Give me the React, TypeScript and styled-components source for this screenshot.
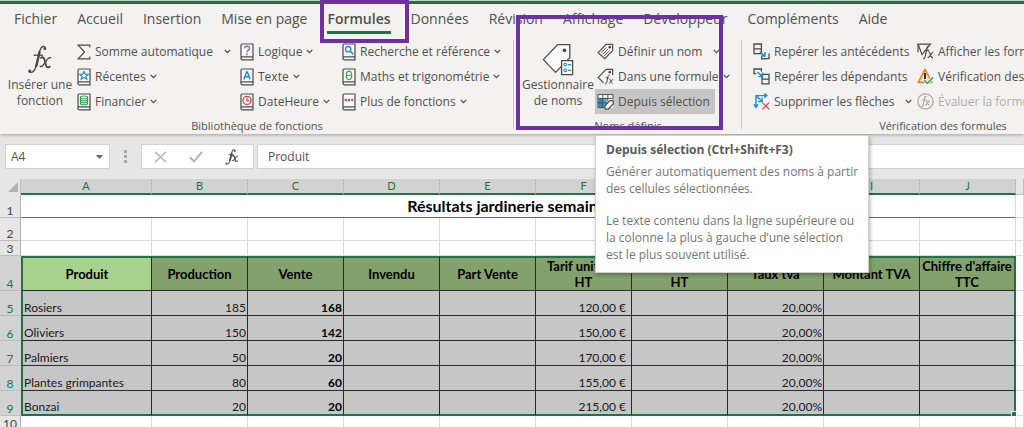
import React from 'react';
import styled, { createGlobalStyle, css } from 'styled-components';

const UI = '"Open Sans", "Noto Sans", sans-serif';
const SHEET = 'Lato, "Open Sans", sans-serif';
const GREEN = '#217346';
const PURPLE = '#7030a0';

const GlobalStyle = createGlobalStyle`
  * { box-sizing: border-box; }
  body { margin: 0; background: #e6e6e6; font-family: ${UI}; }
  button, input { font: inherit; color: inherit; }
`;

const App_ = styled.div`
  height: 100vh;
  overflow: hidden;
  display: flex;
  flex-direction: column;
  color: #505050;
`;

const TitleStrip = styled.div`
  flex: none;
  height: 4px;
  border-top: 1px solid #b9d3c5;
  background: ${GREEN};
`;

const Ribbon = styled.header`
  flex: none;
  background: #f3f2f1;
  box-shadow: 0 1px 3px rgba(0, 0, 0, 0.3);
`;

const Tabs = styled.nav`
  display: flex;
  gap: 20px;
  height: 35px;
  padding-left: 14px;
  align-items: flex-start;
`;

const Tab = styled.button<{ $active?: boolean }>`
  position: relative;
  flex: none;
  height: 30px;
  padding: 3px 0 0;
  border: 0;
  border-bottom: 3px solid ${(p) => (p.$active ? GREEN : 'transparent')};
  background: none;
  font-size: 14px;
  line-height: 24px;
  font-weight: ${(p) => (p.$active ? 600 : 400)};
  white-space: nowrap;
`;

const Highlight = styled.span<{ $inset: string }>`
  position: absolute;
  inset: ${(p) => p.$inset};
  border: 4px solid ${PURPLE};
  pointer-events: none;
  z-index: 2;
`;

const Groups = styled.div`
  display: grid;
  grid-template-columns: 514px 228px minmax(402px, 1fr);
  height: 95px;
`;

const Group = styled.section`
  position: relative;
  display: flex;
  flex-direction: column;
  &:not(:last-of-type)::after {
    content: '';
    position: absolute;
    inset: 1px 0 5px auto;
    width: 1px;
    background: #c8c6c4;
  }
`;

const Tools = styled.div<{ $columns: string; $left: number }>`
  display: grid;
  grid-template-columns: ${(p) => p.$columns};
  padding-left: ${(p) => p.$left}px;
  height: 76px;
`;

const GroupLabel = styled.div`
  font-size: 11px;
  line-height: 16px;
  padding-top: 3px;
  text-align: center;
  white-space: nowrap;
`;

const Column = styled.div`
  display: flex;
  flex-direction: column;
  align-items: flex-start;
`;

const ToolButton = styled.button<{ $pressed?: boolean; $muted?: boolean }>`
  display: flex;
  align-items: center;
  height: 25px;
  padding: 0 5px 0 2px;
  border: 0;
  background: ${(p) => (p.$pressed ? '#c5c5c5' : 'none')};
  color: ${(p) => (p.$muted ? '#b0aeac' : 'inherit')};
  font-size: 12px;
  white-space: nowrap;
  svg:first-child { flex: none; margin-right: 4px; }
`;

const BigButton = styled.button`
  display: flex;
  flex-direction: column;
  align-items: center;
  padding: 3px 0 0;
  border: 0;
  background: none;
  font-size: 12px;
  line-height: 16px;
  white-space: nowrap;
  svg { display: block; }
`;

const BigIcon = styled.span`
  display: grid;
  place-items: center;
  height: 35px;
`;

const ChevronSvg = styled.svg<{ $split?: boolean }>`
  flex: none;
  margin-left: ${(p) => (p.$split ? 11 : 4)}px;
`;

const Tooltip = styled.div`
  position: absolute;
  top: 96px;
  left: 81px;
  z-index: 3;
  width: 274px;
  padding: 5px 10px 9px;
  border: 1px solid #d0d0d0;
  background: #fff;
  box-shadow: 1px 2px 4px rgba(0, 0, 0, 0.3);
  color: #757575;
  font-size: 12px;
  line-height: 17px;
  white-space: nowrap;
  strong { display: block; margin-bottom: 5px; color: #5a5a5a; }
  p { margin: 0; }
  p + p { margin-top: 15px; }
`;

const FormulaBar = styled.div`
  flex: none;
  display: grid;
  grid-template-columns: 105px 25px 113px 1fr;
  column-gap: 3px;
  height: 45px;
  padding: 10px 0 10px 5px;
  font-size: 12px;
`;

const Field = styled.label`
  display: flex;
  align-items: center;
  height: 25px;
  border: 1px solid #d2d2d2;
  background: #fff;
  input {
    flex: 1;
    min-width: 0;
    padding: 0 5px;
    border: 0;
    outline: 0;
    background: none;
  }
  svg { margin-right: 6px; }
`;

const FormulaField = styled(Field)`
  border-right: 0;
  input { padding-left: 10px; }
`;

const Grip = styled.div`
  display: grid;
  place-items: center;
`;

const FormulaActions = styled.div`
  display: flex;
  align-items: center;
  justify-content: space-around;
  height: 25px;
  padding-right: 3px;
  border: 1px solid #d2d2d2;
  background: #fff;
  button { display: grid; place-items: center; width: 26px; padding: 0; border: 0; background: none; }
`;

const Sheet = styled.table`
  flex: none;
  width: 100%;
  table-layout: fixed;
  border-collapse: separate;
  border-spacing: 0;
  font-family: ${SHEET};
  font-size: 12px;
  line-height: 15px;
  color: #1a1a1a;
  td, th { padding: 0; white-space: nowrap; }
`;

const Col = styled.col<{ $w?: number }>`
  width: ${(p) => (p.$w ? `${p.$w}px` : 'auto')};
`;

const Row = styled.tr<{ $h: number }>`
  height: ${(p) => p.$h}px;
`;

const Corner = styled.td`
  border-right: 1px solid #c0c0c0;
  background: #e6e6e6;
  svg { display: block; margin-left: auto; margin-right: 2px; }
`;

const ColHead = styled.th<{ $selected?: boolean }>`
  border-right: 1px solid #bdbdbd;
  border-bottom: ${(p) => (p.$selected ? `2px solid ${GREEN}` : '1px solid #bdbdbd')};
  background: ${(p) => (p.$selected ? '#d2d2d2' : '#e6e6e6')};
  color: ${GREEN};
  font-weight: 400;
  font-size: 11px;
  line-height: 14px;
`;

const RowHead = styled.th<{ $selected?: boolean }>`
  border-right: 1px solid ${(p) => (p.$selected ? '#d2d2d2' : '#b4b4b4')};
  border-bottom: 1px solid #bdbdbd;
  background: ${(p) => (p.$selected ? '#d2d2d2' : '#e6e6e6')};
  color: ${(p) => (p.$selected ? GREEN : '#444')};
  font-weight: 400;
  font-size: 12px;
  line-height: 13px;
  vertical-align: bottom;
`;

const Cell = styled.td`
  border-right: 1px solid #dadada;
  border-bottom: 1px solid #dadada;
  background: #fff;
`;

const TitleCell = styled(Cell)`
  border-bottom: 1px solid #6a6a6a;
  color: #000;
  font-size: 16px;
  font-weight: 700;
  line-height: 20px;
  text-align: center;
`;

type Edges = { $left?: boolean; $right?: boolean; $bottom?: boolean };

const edges = css<Edges>`
  border-right: 1px solid #2b2b2b;
  border-bottom: 1px solid #2b2b2b;
  ${(p) => p.$left && `border-left: 2px solid ${GREEN};`}
  ${(p) => p.$right && `border-right: 2px solid ${GREEN};`}
  ${(p) => p.$bottom && `border-bottom: 2px solid ${GREEN};`}
`;

const HeadCell = styled.th<Edges>`
  ${edges}
  border-top: 2px solid ${GREEN};
  background: ${(p) => (p.$left ? '#a9d18e' : '#82a16c')};
  color: #000;
  font-size: 13px;
  line-height: 16px;
`;

const DataCell = styled.td<Edges & { $align?: string; $bold?: boolean }>`
  ${edges}
  position: relative;
  && { padding: 0 ${(p) => (p.$align === 'accounting' ? 5 : 1)}px 0 1px; }
  background: #c6c6c6;
  font-weight: ${(p) => (p.$bold ? 700 : 400)};
  color: ${(p) => (p.$bold ? '#000' : 'inherit')};
  text-align: ${(p) => (p.$align ? 'right' : 'left')};
  vertical-align: bottom;
`;

const FillHandle = styled.span`
  position: absolute;
  right: -3px;
  bottom: -3px;
  width: 6px;
  height: 6px;
  border: 1px solid #fff;
  background: ${GREEN};
`;

const ink = '#4a4a4a';
const blue = '#1e8bcd';

const Chevron = ({ split }: { split?: boolean }) => (
  <ChevronSvg $split={split} width="7" height="5" viewBox="0 0 7 5" fill="none" stroke={ink} strokeWidth="1.2">
    <path d="M.7 .8 3.5 3.6 6.3 .8" />
  </ChevronSvg>
);

const Book = ({ children }: { children: React.ReactNode }) => (
  <svg width="14" height="18" viewBox="0 0 14 18" fill="none">
    <path d="M1 15.5V2.2Q1 1 2.2 1H13v15.8H2.4A1.3 1.3 0 0 1 2.4 13.8H13" fill="#fafafa" stroke={ink} strokeWidth="1.2" />
    {children}
  </svg>
);

const Sigma = () => (
  <svg width="14" height="16" viewBox="0 0 14 16" fill="none" stroke={ink} strokeWidth="1.2">
    <path d="M12.8 3.4V1.2H1.2L7.6 8 1.2 14.8h11.6v-2.2" />
  </svg>
);
const Star = () => (
  <Book><path d="m7 3.4 1.2 2.8 3 .2-2.3 1.9.8 2.9L7 9.6l-2.7 1.6.8-2.9-2.3-1.9 3-.2z" stroke={blue} strokeWidth="1.2" /></Book>
);
const Coins = () => (
  <Book>
    <g stroke="#2e9e48" strokeWidth="1.1">
      <ellipse cx="7" cy="4.4" rx="3.6" ry="1.4" />
      <path d="M3.4 4.4v6c0 .8 1.6 1.4 3.6 1.4s3.6-.6 3.6-1.4v-6M3.4 6.5c0 .8 1.6 1.4 3.6 1.4s3.6-.6 3.6-1.4M3.4 8.5c0 .8 1.6 1.4 3.6 1.4s3.6-.6 3.6-1.4" />
    </g>
  </Book>
);
const Question = () => (
  <Book>
    <path d="M4.6 5.2C4.6 2.6 9.6 2.6 9.6 5.2 9.6 7 7 7.2 7 9.4" stroke="#a94bc4" strokeWidth="1.3" />
    <circle cx="7" cy="11.4" r=".9" fill="#a94bc4" />
  </Book>
);
const LetterA = () => (
  <Book><path d="M3.8 11.2 6.7 4h.6l2.9 7.2M5 8.7h4" stroke={blue} strokeWidth="1.5" /></Book>
);
const Clock = () => (
  <Book>
    <circle cx="7" cy="7.4" r="4" stroke="#e8383d" strokeWidth="1.3" />
    <path d="M7 5v2.6h2.4" stroke="#e8383d" strokeWidth="1.2" />
  </Book>
);
const Search = () => (
  <Book>
    <circle cx="6.2" cy="6.2" r="2.7" stroke={blue} strokeWidth="1.3" />
    <path d="m8.2 8.2 3.2 3.2" stroke={blue} strokeWidth="1.5" />
  </Book>
);
const Theta = () => (
  <Book>
    <ellipse cx="7" cy="7.4" rx="2.7" ry="4.2" stroke="#3aa655" strokeWidth="1.2" />
    <path d="M4.4 7.4h5.2" stroke="#3aa655" strokeWidth="1.1" />
  </Book>
);
const Dots = () => (
  <Book>
    <g fill="#e8383d"><circle cx="3.8" cy="7" r="1.2" /><circle cx="7" cy="7" r="1.2" /><circle cx="10.2" cy="7" r="1.2" /></g>
  </Book>
);

const Fx = ({ width, height, color = ink, stroke = 1.4 }: { width: number; height: number; color?: string; stroke?: number }) => (
  <svg width={width} height={height} viewBox="0 0 26 30" fill="none" stroke={color} strokeWidth={stroke}>
    <path d="M18.6 3.2C17.6 .6 14.6 .9 13.3 4.6 11.8 9 10 18.6 8.2 24 7 27.8 4 29.4 1.8 27.4" />
    <path d="M12.6 6.6C11.6 11 10.4 17.6 8.8 22.6" strokeWidth={stroke * 1.8} />
    <path d="M6.4 10.6h9.6" />
    <path d="M13.4 13.8c2.2-2.2 3.6-1.2 4.4 1.6l1.4 5.6c.8 2.6 2.4 3 4.4.8" strokeWidth={stroke * 1.4} />
    <path d="M24.6 13.4c-2-1.2-3.4.4-6 4.2-2.4 3.6-3.8 5.6-6 4.4" />
    <circle cx="18" cy="3.6" r=".9" fill={color} />
    <circle cx="2.4" cy="27" r=".9" fill={color} />
  </svg>
);

const NameManager = () => (
  <svg width="32" height="33" viewBox="0 0 32 33" fill="none">
    <path d="M1.4 16.6 15.6 1.6h12.2v13L13.6 29.4z" fill="#fafafa" stroke={ink} strokeWidth="1.3" />
    <circle cx="22.4" cy="7.4" r="1.8" fill={ink} />
    <path d="M19.6 17.6h11v14h-11z" fill="#fff" stroke={ink} strokeWidth="1.3" />
    <path d="M22 20.4h2.4v2.4H22zM22 26.2h2.4v2.4H22z" stroke={blue} />
    <path d="M25.8 21.6h3.4M25.8 27.4h3.4" stroke={blue} strokeWidth="1.2" />
  </svg>
);
const TagLines = () => (
  <svg width="17" height="17" viewBox="0 0 17 17" fill="none" stroke={ink} strokeWidth="1.2">
    <path d="M1.2 9.6 9.2 1.4h6.4v6.2L7.8 15.6z" fill="#fafafa" />
    <circle cx="12.8" cy="4.2" r=".8" fill={ink} />
    <path d="m4 9.8 5.4-5.4M5.6 11.4 11 6M7.2 13l5.4-5.4" strokeWidth="1" />
  </svg>
);
const TagFx = () => (
  <svg width="17" height="17" viewBox="0 0 17 17" fill="none" stroke={ink} strokeWidth="1.2">
    <path d="M15.6 7V1.4H9.2L1.2 9.4l5.4 5.4" fill="#fafafa" />
    <circle cx="12.8" cy="4.2" r=".8" fill={ink} />
    <path d="M12.8 7.2c-1.2-.6-1.7.2-2 1.6l-1 5.4c-.3 1.4-.9 2-1.9 1.6M8.8 9.8h3M12.4 11.2c1.4-.6 1.2 3.8 3.2 4.2M16.2 11.2c-1.4 0-2.2 3.6-4.2 4.2" strokeWidth="1" />
  </svg>
);
const TableTag = () => (
  <svg width="17" height="17" viewBox="0 0 17 17" fill="none">
    <path d="M1 1.6h15v13H1z" fill="#fff" />
    <path d="M1.4 5.4h4.4v9H1.4z" fill={blue} />
    <path d="M5.8 5.4h4.6V10L8 14.4H5.8z" fill="#58a9dc" />
    <path d="M1 1.6h15v4M1 1.6v13h6.4M1 5.4h15M1 9.8h9M5.8 1.6v13M10.8 1.6v6" stroke={ink} />
    <path d="m7.8 13 5-5.4h3.4V11l-5 5.2H8.4z" fill="#fafafa" stroke={ink} strokeWidth="1.2" />
  </svg>
);
const Precedents = () => (
  <svg width="17" height="17" viewBox="0 0 17 17" fill="none">
    <path d="M1 1h7.4v9.6H1zM1 5.8h7.4M11 15.6h5v-5M8.6 13.2v2.6H12" stroke={ink} strokeWidth="1.3" />
    <path d="m6.8 8.4 4.8 4.4M12 9v4H8" stroke={blue} strokeWidth="1.4" />
  </svg>
);
const Dependents = () => (
  <svg width="17" height="17" viewBox="0 0 17 17" fill="none">
    <path d="M3.2 5.6H1V1h7.4v2.4M9 6.4h7v9.4H9zM9 11.2h7" stroke={ink} strokeWidth="1.3" />
    <path d="m4.4 4 4.8 4.4M9.6 4.4v4.2H5.4" stroke={blue} strokeWidth="1.4" />
  </svg>
);
const RemoveArrows = () => (
  <svg width="17" height="17" viewBox="0 0 17 17" fill="none">
    <path d="M3 14V2.6h10.4M1 11.4l2 2.8 2-2.8M11.2.6l2.6 2-2.6 2M4 3.6l5 4.8M9 4.6v4H5" stroke={blue} strokeWidth="1.4" />
    <path d="m9.4 9.6 6.8 6.6M16.2 9.6l-6.8 6.6" stroke="#e8474b" strokeWidth="1.3" />
  </svg>
);
const ShowFormulas = () => (
  <svg width="17" height="17" viewBox="0 0 17 17" fill="none" stroke={ink} strokeWidth="1.2">
    <path d="M5.4 12.2 1 1.2h12.4L4.8 12" />
    <path d="M1 1.2v8" />
    <path d="M12.2 3.4c-1.4-.6-2.1.4-2.5 2.4l-1.4 7.4c-.4 1.8-1.1 2.6-2.3 2.2M7.6 7.4h4.6M11.4 9c1.9-.8 1.8 5.6 4.6 6M16.4 9c-1.9 0-2.8 5.4-5.8 6" />
  </svg>
);
const ErrorCheck = () => (
  <svg width="17" height="17" viewBox="0 0 17 17" fill="none">
    <path d="M8 1.4 1.2 14.4h13.6z" fill="#fbe3c4" stroke="#e67e22" strokeWidth="1.6" strokeLinejoin="round" />
    <path d="M8 5v6" stroke="#333" strokeWidth="2" />
    <path d="m7.2 12 3 3.4 6-6" stroke="#fff" strokeWidth="3" />
    <path d="m7.2 12 3 3.4 6-6" stroke="#3aa655" strokeWidth="1.6" />
  </svg>
);
const Evaluate = () => (
  <svg width="17" height="17" viewBox="0 0 17 17" fill="none" stroke="#a5a5a5" strokeWidth="1.2">
    <circle cx="8.5" cy="8.5" r="7.7" />
    <path d="M9.6 3.6c-1.2-.5-1.8.2-2.1 1.8l-1.2 6.4c-.3 1.4-.9 2-1.9 1.6M5.4 7h4M8.8 7.6c1.6-.6 1.4 4.2 3.6 4.6M12.8 7.6c-1.4 0-2.4 4.2-4.6 4.6" />
  </svg>
);

type Item = { icon: React.ReactNode; label: string; arrow?: 'near' | 'split'; pressed?: boolean; muted?: boolean };

const Tool = ({ icon, label, arrow, pressed, muted }: Item) => (
  <ToolButton $pressed={pressed} $muted={muted} disabled={muted}>
    {icon}
    <span>{label}</span>
    {arrow && <Chevron split={arrow === 'split'} />}
  </ToolButton>
);

const ToolColumn = ({ items }: { items: Item[] }) => (
  <Column>{items.map((item) => <Tool key={item.label} {...item} />)}</Column>
);

const tabs = ['Fichier', 'Accueil', 'Insertion', 'Mise en page', 'Formules', 'Données', 'Révision', 'Affichage', 'Développeur', 'Compléments', 'Aide'];

const letters = ['A', 'B', 'C', 'D', 'E', 'F', 'G', 'H', 'I', 'J'];

const headings = [
  ['Produit'], ['Production'], ['Vente'], ['Invendu'], ['Part Vente'],
  ['Tarif unitaire', 'HT'], ['Montant', 'HT'], ['Taux tva'], ['Montant TVA'], ["Chiffre d'affaire", 'TTC'],
];

const products = [
  { name: 'Rosiers', made: 185, sold: 168, price: '120,00 €' },
  { name: 'Oliviers', made: 150, sold: 142, price: '150,00 €' },
  { name: 'Palmiers', made: 50, sold: 20, price: '170,00 €' },
  { name: 'Plantes grimpantes', made: 80, sold: 60, price: '155,00 €' },
  { name: 'Bonzai', made: 20, sold: 20, price: '215,00 €' },
];

const BlankRow = ({ n, height }: { n: number; height: number }) => (
  <Row $h={height}>
    <RowHead scope="row">{n}</RowHead>
    {letters.map((l) => <Cell key={l} />)}
    <Cell />
  </Row>
);

export default function App() {
  return (
    <App_>
      <GlobalStyle />
      <TitleStrip />
      <Ribbon>
        <Tabs>
          {tabs.map((t) => (
            <Tab key={t} $active={t === 'Formules'}>
              {t}
              {t === 'Formules' && <Highlight $inset="-4px -18px -12px -7px" />}
            </Tab>
          ))}
        </Tabs>
        <Groups>
          <Group>
            <Tools $left={5} $columns="70px 163px 102px 1fr">
              <BigButton>
                <BigIcon><Fx width={26} height={29} /></BigIcon>
                <span>Insérer une<br />fonction</span>
              </BigButton>
              <ToolColumn items={[
                { icon: <Sigma />, label: 'Somme automatique', arrow: 'split' },
                { icon: <Star />, label: 'Récentes', arrow: 'near' },
                { icon: <Coins />, label: 'Financier', arrow: 'near' },
              ]} />
              <ToolColumn items={[
                { icon: <Question />, label: 'Logique', arrow: 'near' },
                { icon: <LetterA />, label: 'Texte', arrow: 'near' },
                { icon: <Clock />, label: 'DateHeure', arrow: 'near' },
              ]} />
              <ToolColumn items={[
                { icon: <Search />, label: 'Recherche et référence', arrow: 'near' },
                { icon: <Theta />, label: 'Maths et trigonométrie', arrow: 'near' },
                { icon: <Dots />, label: 'Plus de fonctions', arrow: 'near' },
              ]} />
            </Tools>
            <GroupLabel>Bibliothèque de fonctions</GroupLabel>
          </Group>
          <Group>
            <Tools $left={7} $columns="74px 1fr">
              <BigButton>
                <BigIcon><NameManager /></BigIcon>
                <span>Gestionnaire<br />de noms</span>
              </BigButton>
              <ToolColumn items={[
                { icon: <TagLines />, label: 'Définir un nom', arrow: 'split' },
                { icon: <TagFx />, label: 'Dans une formule', arrow: 'near' },
                { icon: <TableTag />, label: 'Depuis sélection', pressed: true },
              ]} />
            </Tools>
            <GroupLabel>Noms définis</GroupLabel>
            <Highlight $inset="-24px 19px 4px 2px" />
            <Tooltip role="tooltip">
              <strong>Depuis sélection (Ctrl+Shift+F3)</strong>
              <p>Générer automatiquement des noms à partir<br />des cellules sélectionnées.</p>
              <p>Le texte contenu dans la ligne supérieure ou<br />la colonne la plus à gauche d’une sélection<br />est le plus souvent utilisé.</p>
            </Tooltip>
          </Group>
          <Group>
            <Tools $left={9} $columns="164px 1fr">
              <ToolColumn items={[
                { icon: <Precedents />, label: 'Repérer les antécédents' },
                { icon: <Dependents />, label: 'Repérer les dépendants' },
                { icon: <RemoveArrows />, label: 'Supprimer les flèches', arrow: 'split' },
              ]} />
              <ToolColumn items={[
                { icon: <ShowFormulas />, label: 'Afficher les formules' },
                { icon: <ErrorCheck />, label: 'Vérification des erreurs', arrow: 'split' },
                { icon: <Evaluate />, label: 'Évaluer la formule', muted: true },
              ]} />
            </Tools>
            <GroupLabel>Vérification des formules</GroupLabel>
          </Group>
        </Groups>
      </Ribbon>

      <FormulaBar>
        <Field>
          <input aria-label="Zone Nom" defaultValue="A4" />
          <svg width="7" height="4" viewBox="0 0 7 4"><path d="M0 0h7L3.500 4z" fill="#666" /></svg>
        </Field>
        <Grip>
          <svg width="3" height="14" viewBox="0 0 3 14" fill="#a8a8a8"><path d="M0 0h3v3H0zM0 5h3v3H0zM0 10h3v3H0z" /></svg>
        </Grip>
        <FormulaActions>
          <button aria-label="Annuler">
            <svg width="13" height="12" viewBox="0 0 13 12" stroke="#b9b9b9" strokeWidth="1.7"><path d="m1 .8 11 10.400M12 .8 1 11.200" /></svg>
          </button>
          <button aria-label="Entrer">
            <svg width="14" height="12" viewBox="0 0 14 12" fill="none" stroke="#b9b9b9" strokeWidth="2.2"><path d="m1 6.400 4 4L13 1" /></svg>
          </button>
          <button aria-label="Insérer une fonction"><Fx width={14} height={16} color="#555" stroke={1.9} /></button>
        </FormulaActions>
        <FormulaField>
          <input aria-label="Barre de formule" defaultValue="Produit" />
        </FormulaField>
      </FormulaBar>

      <Sheet>
        <colgroup>
          <Col $w={21} />
          <Col $w={131} />
          {letters.slice(1).map((l) => <Col key={l} $w={96} />)}
          <Col />
        </colgroup>
        <thead>
          <Row $h={16}>
            <Corner><svg width="10" height="10" viewBox="0 0 10 10"><path d="M10 0v10H0z" fill="#b2b2b2" /></svg></Corner>
            {letters.map((l) => <ColHead key={l} scope="col" $selected>{l}</ColHead>)}
            <ColHead />
          </Row>
        </thead>
        <tbody>
          <Row $h={23}>
            <RowHead scope="row">1</RowHead>
            <TitleCell colSpan={10}>Résultats jardinerie semaine 12</TitleCell>
            <Cell />
          </Row>
          <BlankRow n={2} height={23} />
          <BlankRow n={3} height={15} />
          <Row $h={35}>
            <RowHead scope="row" $selected>4</RowHead>
            {headings.map((lines, i) => (
              <HeadCell key={i} scope="col" $left={i === 0} $right={i === 9}>
                {lines[0]}
                {lines[1] && <><br />{lines[1]}</>}
              </HeadCell>
            ))}
            <Cell />
          </Row>
          {products.map((p, i) => {
            const last = i === products.length - 1;
            return (
              <Row key={p.name} $h={25}>
                <RowHead scope="row" $selected>{i + 5}</RowHead>
                <DataCell $left $bottom={last}>{p.name}</DataCell>
                <DataCell $align="right" $bottom={last}>{p.made}</DataCell>
                <DataCell $align="right" $bold $bottom={last}>{p.sold}</DataCell>
                <DataCell $bottom={last} />
                <DataCell $bottom={last} />
                <DataCell $align="accounting" $bottom={last}>{p.price}</DataCell>
                <DataCell $bottom={last} />
                <DataCell $align="right" $bottom={last}>20,00%</DataCell>
                <DataCell $bottom={last} />
                <DataCell $right $bottom={last}>{last && <FillHandle />}</DataCell>
                <Cell />
              </Row>
            );
          })}
          <BlankRow n={10} height={15} />
        </tbody>
      </Sheet>
    </App_>
  );
}
